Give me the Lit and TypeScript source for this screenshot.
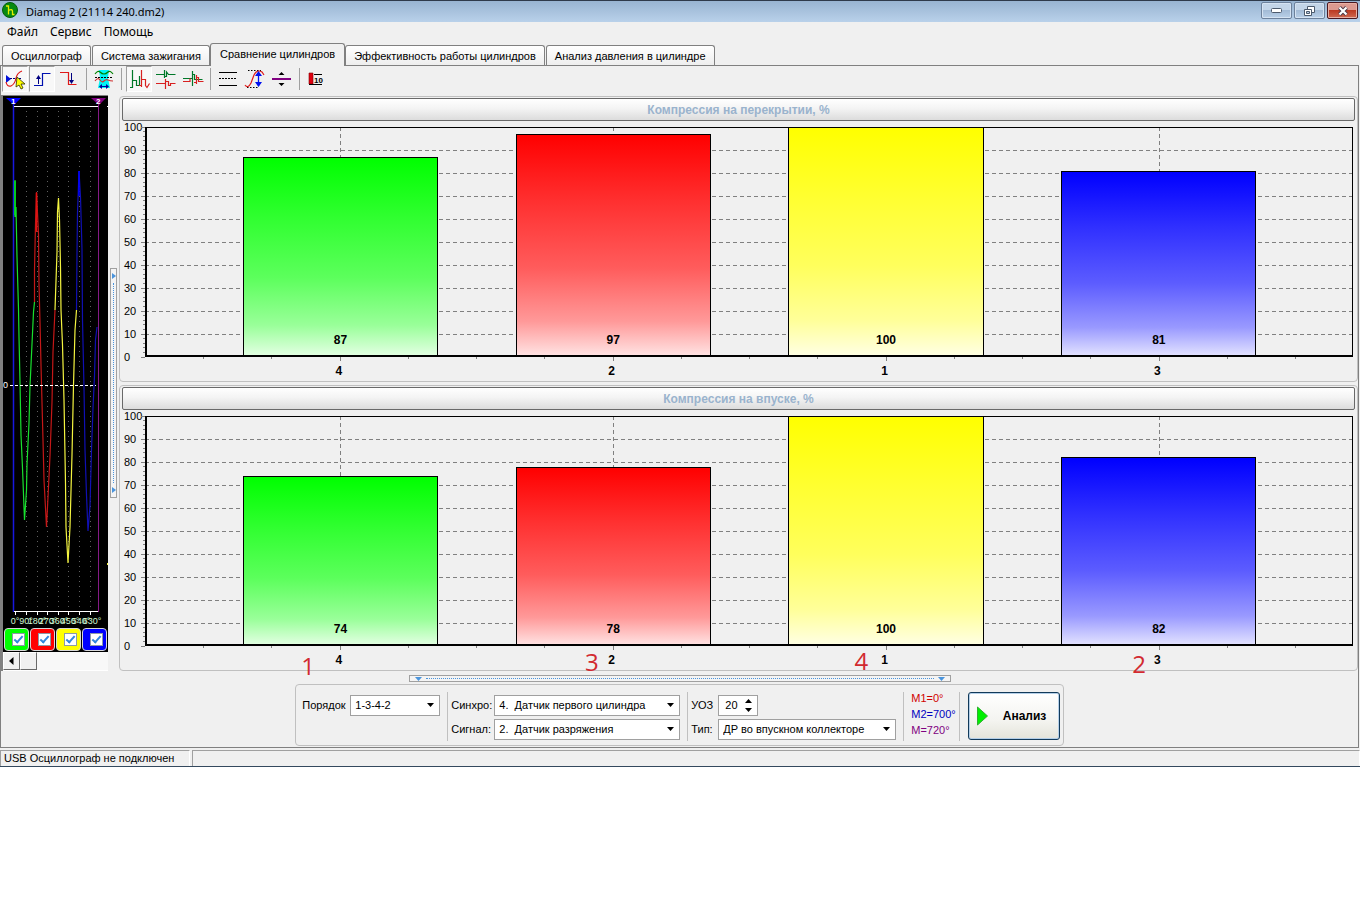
import { LitElement, html, svg, css, nothing } from "lit";
import { customElement, property, state } from "lit/decorators.js";
import { classMap } from "lit/directives/class-map.js";
import { styleMap } from "lit/directives/style-map.js";

interface Bar {
  cylinder: string;
  value: number;
  tone: string;
  note?: string;
  noteAt?: number;
  noteTop?: number;
}

const range = (n: number) => Array.from({ length: n }, (_, i) => i);

@customElement("bar-chart")
class BarChart extends LitElement {
  @property() heading = "";
  @property({ attribute: false }) bars: Bar[] = [];

  static styles = css`
    :host { display: block; border: 1px solid #c0c0c0; border-radius: 4px; padding: 1px 2px 0; font: 11px/14px "Liberation Sans", Arial, sans-serif; color: #000; }
    .head { margin: 0; height: 23px; box-sizing: border-box; border: 1px solid #696969; border-radius: 2px; background: linear-gradient(#fff, #f4f4f4 45%, #dcdcdc); text-align: center; font: bold 12px/22px "Liberation Sans", Arial, sans-serif; color: #9ab3cd; }
    .body { display: grid; grid-template-columns: 23px minmax(0, 1fr); padding: 6px 2px 0 0; }
    .scale { display: flex; flex-direction: column; justify-content: space-between; margin: -7px 0; padding-left: 2px; grid-row: 1; }
    .plot { display: grid; height: 230px; }
    .plot > * { grid-area: 1 / 1; min-width: 0; }
    .lines { width: 100%; height: 100%; overflow: visible; shape-rendering: crispEdges; }
    .bars, .names { display: flex; justify-content: space-between; }
    .bars { align-items: flex-end; padding: 0 8% 0 8.1%; }
    .bar { width: 19.25%; box-sizing: border-box; border: 1px solid #000; border-bottom: 0; display: flex; align-items: flex-end; justify-content: center; font: bold 12px/14px "Liberation Sans", Arial, sans-serif; padding-bottom: 10px; }
    .green { background: linear-gradient(#00ff00, #30ff30 30%, #5cff5c 60%, #99ff99 84%, #e6ffe6); }
    .red { background: linear-gradient(#ff0000, #ff3030 30%, #ff5c5c 60%, #ff9999 84%, #ffe6e6); }
    .yellow { background: linear-gradient(#ffff00, #ffff30 30%, #ffff5c 60%, #ffff99 84%, #ffffe6); }
    .blue { background: linear-gradient(#0000ff, #3030ff 30%, #5c5cff 60%, #9999ff 84%, #e6e6ff); }
    .frame { border: solid #000; border-width: 1px 1px 2px 2px; }
    .foot { position: relative; grid-column: 2; height: 24px; }
    .names { font: bold 12px/14px "Liberation Sans", Arial, sans-serif; padding: 7px 8.1% 0 7.95%; }
    .names span { width: 19.3%; text-align: center; }
    .note { position: absolute; font: 24px/24px "Open Sans", sans-serif; color: #d22a30; transform: translateX(-50%); }
  `;

  render() {
    return html`
      <h2 class="head">${this.heading}</h2>
      <div class="body">
        <div class="scale">${range(11).map((i) => html`<span>${100 - i * 10}</span>`)}</div>
        <div class="plot">
          <svg class="lines" aria-hidden="true">
            ${range(9).map((i) => svg`<line x1="0" x2="100%" y1="${(i + 1) * 10}%" y2="${(i + 1) * 10}%" stroke="#808080" stroke-dasharray="4 3"/>`)}
            ${range(11).map((i) => svg`<line x1="-4" x2="0" y1="${i * 10}%" y2="${i * 10}%" stroke="#808080"/>`)}
            ${range(51).map((i) => svg`<line x1="-2" x2="0" y1="${i * 2}%" y2="${i * 2}%" stroke="#808080"/>`)}
            ${this.bars.map((_, i) => svg`<line x1="${16.15 + i * 22.6}%" x2="${16.15 + i * 22.6}%" y1="0" y2="100%" stroke="#808080" stroke-dasharray="4 3"/>`)}
            ${range(17).map((i) => svg`<line x1="${4.85 + i * 5.65}%" x2="${4.85 + i * 5.65}%" y1="230" y2="${i % 4 === 2 ? 234 : 232}" stroke="#808080"/>`)}
          </svg>
          <div class="bars">
            ${this.bars.map((b) => html`<div class="bar ${b.tone}" style=${styleMap({ height: `${b.value}%` })}>${b.value}</div>`)}
          </div>
          <div class="frame"></div>
        </div>
        <div class="foot">
          <div class="names">${this.bars.map((b) => html`<span>${b.cylinder}</span>`)}</div>
          ${this.bars.map((b) => b.note ? html`<span class="note" style=${styleMap({ left: `${b.noteAt}%`, top: `${b.noteTop}px` })}>${b.note}</span>` : nothing)}
        </div>
      </div>`;
  }
}

@customElement("signal-scope")
class SignalScope extends LitElement {
  static styles = css`
    :host { display: block; width: 107px; box-sizing: border-box; border: solid #808080; border-width: 1px 0 0 2px; background: #f0f0f0; }
    .screen { display: block; width: 105px; height: 532px; background: #000; font: 9px/9px "Liberation Sans", Arial, sans-serif; }
    .channels { display: flex; gap: 1px; background: #000; width: 105px; height: 24px; padding: 0 1px 1px; box-sizing: border-box; }
    .channel { flex: 1; box-sizing: border-box; border: 1px solid #d8d8d8; border-radius: 4px; display: flex; align-items: center; justify-content: center; padding-left: 3px; }
    .green { background: #00ff00; } .red { background: #ff0000; } .yellow { background: #ffff00; } .blue { background: #0000ff; }
    .channel input { appearance: none; margin: 0; width: 13px; height: 13px; border: 1px solid #8c9aa8; background: #fff; display: grid; place-items: center; }
    .channel input:checked::before { content: ""; width: 3px; height: 7px; border: solid #2f86dd; border-width: 0 2px 2px 0; transform: rotate(42deg); margin-top: -3px; }
    .scroll { display: flex; height: 18px; width: 105px; background: #f8f8f8; border-bottom: 1px solid #fff; }
    .scroll button, .thumb { width: 17px; box-sizing: border-box; padding: 0; border: 1px solid; border-color: #fff #696969 #696969 #fff; background: #f0f0f0; display: grid; place-items: center; }
  `;

  // The screen is drawn in window coordinates; the view box starts at its corner.
  render() {
    const traces: [string, string][] = [
      ["#19e02f", "15,180 15,217 16,207 17,257 18.5,309 19,337 20,382 21,435 22.5,468 24.5,520 26.5,490 27,464 29,423 30,386 32,344 33.5,312 34.5,302"],
      ["#c41818", "34.5,302 34.5,270 35.5,224 36.5,192 38.5,234 39,284 40,322 41,365 43,440 44,480 46.5,527 48,497 50,456 52,402 53,352 55,310"],
      ["#f4f440", "55,310 57,252 57.5,212 58.5,198 59.5,220 60.5,267 61,310 62.5,345 64,400 65.5,483 66,527 68,563 70,527 72,455 73.5,385 75,330 76.5,310"],
      ["#1010b4", "76.5,310 77,252 77.5,212 79,171 80.5,197 82,250 82.5,320 84,388 85,450 86.5,495 88,531 90,506 91.5,450 93,408 94.5,376 95.5,340 97,327"],
    ];
    const degrees = ["0°", "90°", "180°", "270°", "360°", "450°", "540°", "630°"];
    return html`
      <svg class="screen" viewBox="3 96 105 532" aria-label="Осциллограмма">
        <g stroke="#606060" stroke-dasharray="1 4">
          ${[26.5, 37.5, 47.5, 58.5, 68.5, 79.5, 90.5].map((x) => svg`<line x1="${x}" x2="${x}" y1="111" y2="610"/>`)}
        </g>
        <path d="M13.500 98V612" stroke="#1818e0" stroke-width="1.500"/>
        <path d="M98.500 98V612" stroke="#861a86"/>
        <path d="M14 106.500H98M107 106.500h1M14 611.500H98M15.500 612v3M26.500 612v3M37.500 612v3M47.500 612v3M58.500 612v3M68.500 612v3M79.500 612v3M90.500 612v3" stroke="#fff"/>
        ${traces.map(([c, p]) => svg`<polyline points="${p}" fill="none" stroke="${c}" stroke-width="1.200"/>`)}
        <path d="M79 171V196" stroke="#0000ff" stroke-width="1.500"/>
        <path d="M15 181V215" stroke="#00e020" stroke-width="1.500"/>
        <path d="M36.500 193V232" stroke="#e01010" stroke-width="1.500"/>
        <path d="M10 385.500H96" stroke="#fff" stroke-dasharray="3 2"/>
        <text x="3" y="388" fill="#fff">0</text>
        <path d="M6 98h15l-7 7z" fill="#0000ff"/>
        <path d="M91 98h15l-7 7z" fill="#800080"/>
        <text x="11" y="104" fill="#fff" font-size="8" font-weight="bold">1</text>
        <text x="96" y="104" fill="#fff" font-size="8" font-weight="bold">2</text>
        <path d="M107 564h1" stroke="#f4f440" stroke-width="2"/>
        ${degrees.map((d, i) => svg`<text x="${15 + i * 11}" y="624" text-anchor="middle" fill="#d4f8d4">${d}</text>`)}
      </svg>
      <div class="channels">
        ${["green", "red", "yellow", "blue"].map((c, i) => html`<label class="channel ${c}"><input type="checkbox" checked aria-label="Канал ${i + 1}" /></label>`)}
      </div>
      <div class="scroll">
        <button aria-label="Влево"><svg width="5" height="8"><path d="M4.500 0v8L0 4z" /></svg></button>
        <div class="thumb"></div>
      </div>`;
  }
}

@customElement("app-root")
class AppRoot extends LitElement {
  @state() private tab = 2;
  @state() private pressed = new Set([0, 1, 4]);

  private tabs = ["Осциллограф", "Система зажигания", "Сравнение цилиндров", "Эффективность работы цилиндров", "Анализ давления в цилиндре"];

  private overlap: Bar[] = [
    { cylinder: "4", value: 87, tone: "green" },
    { cylinder: "2", value: 97, tone: "red" },
    { cylinder: "1", value: 100, tone: "yellow" },
    { cylinder: "3", value: 81, tone: "blue" },
  ];

  private intake: Bar[] = [
    { cylinder: "4", value: 74, tone: "green", note: "1", noteAt: 13.5, noteTop: 8 },
    { cylinder: "2", value: 78, tone: "red", note: "3", noteAt: 37, noteTop: 4 },
    { cylinder: "1", value: 100, tone: "yellow", note: "4", noteAt: 59.3, noteTop: 3 },
    { cylinder: "3", value: 82, tone: "blue", note: "2", noteAt: 82.3, noteTop: 6 },
  ];

  static styles = css`
    :host { display: block; font: 11px/14px "Liberation Sans", Arial, sans-serif; color: #000; background: #fff; min-height: 100vh; }
    button { font: inherit; color: inherit; }
    .window { background: #f0f0f0; border-bottom: 1px solid #34495e; }
    .title { display: flex; align-items: center; height: 22px; box-sizing: border-box; border-top: 1px solid #2e3a4a; background: linear-gradient(#98b4d1, #b9d1ea); padding: 0 2px; font: 11px/18px "Noto Sans", sans-serif; }
    .title h1 { font: inherit; margin: 0 auto 0 8px; }
    .title > svg { align-self: flex-start; margin-top: 1px; }
    .sys { display: flex; gap: 2px; align-self: flex-start; margin-top: 1px; }
    .sys button { width: 31px; height: 17px; padding: 0; border: 1px solid #6d819b; border-radius: 2px; background: linear-gradient(#c3d5e8 45%, #a3bbd6 50%, #b9d0e8); box-shadow: inset 0 0 0 1px #d5e3f2; display: grid; place-items: center; }
    .sys .close { border-color: #4b1820; background: linear-gradient(#dc9a90 45%, #bc3a22 50%, #cf6a52); box-shadow: inset 0 0 0 1px #e8b0a4; }
    .menu { display: flex; gap: 12px; height: 21px; padding: 0 7px; font: 12px/19px "Noto Sans", sans-serif; }
    .menu button { border: 0; background: none; padding: 0; align-self: flex-start; }
    .tabs { display: flex; align-items: flex-end; height: 22px; padding-left: 2px; gap: 1px; }
    .tab { height: 20px; padding: 0 8px; border: 1px solid #808080; border-bottom: 0; border-radius: 3px 3px 0 0; background: linear-gradient(#fff, #eee); white-space: nowrap; }
    .tab.on { height: 23px; margin: 0 -1px -1px; padding: 0 9px 3px; background: #f0f0f0; z-index: 1; }
    .panel { border: 1px solid #808080; margin-right: 1px; }
    .tools { display: flex; align-items: flex-start; height: 29px; gap: 1px; padding-left: 1px; }
    .tool { width: 26px; height: 26px; padding: 0; border: 1px solid transparent; background: none; display: grid; place-items: center; }
    .tool.down { border-color: #a0a0a0 #fff #fff #a0a0a0; background: #f8f8f8; }
    .rule { width: 1px; height: 22px; background: #a0a0a0; margin: 2px 3px 0; }
    .work { display: flex; align-items: flex-start; }
    .grip { align-self: center; margin: 0 2px; width: 7px; height: 230px; border: 1px solid #a0a0a0; background: #f4f4f4; display: flex; flex-direction: column; align-items: center; padding: 4px 0; box-sizing: border-box; }
    .grip i { flex: 1; margin: 4px 0; border-left: 1px dotted #4a94dc; }
    .charts { flex: 1; min-width: 0; display: flex; flex-direction: column; gap: 3px; padding-top: 1px; }
    .hgrip { margin: 4px auto 2px; width: 542px; height: 7px; border: 1px solid #a0a0a0; background: #f4f4f4; display: flex; align-items: center; padding: 0 5px; box-sizing: border-box; }
    .hgrip i { flex: 1; margin: 0 4px; border-top: 1px dotted #4a94dc; }
    .form { width: max-content; margin: 0 auto 1px; box-sizing: border-box; border: 1px solid #c0c0c0; border-radius: 4px; display: flex; align-items: flex-start; height: 62px; padding: 7px 3px 0 6px; }
    .group { display: grid; align-items: center; gap: 4px; grid-auto-rows: 20px; margin-top: 3px; }
    .divider { width: 1px; height: 49px; background: #c0c0c0; margin: 0 3px 0 7px; }
    .order { grid-template-columns: 44px 90px; }
    .source { grid-template-columns: 39px 186px; }
    .kind { grid-template-columns: 23px 178px; }
    .pick { display: grid; height: 21px; }
    .pick > * { grid-area: 1 / 1; }
    .pick svg { justify-self: end; align-self: center; margin-right: 6px; pointer-events: none; }
    select, input[type="number"] { appearance: none; font: inherit; color: inherit; box-sizing: border-box; width: 100%; height: 21px; border: 1px solid #a0a0a0; border-radius: 0; background: #fff; padding: 0 4px; margin: 0; white-space: pre; }
    input[type="number"]::-webkit-inner-spin-button { display: none; }
    .spin { width: 40px; }
    .spin input { padding-left: 6px; }
    .marks { display: flex; flex-direction: column; line-height: 16px; margin: -2px -4px 0 4px; }
    .m1 { color: #d00000; } .m2 { color: #0000c0; } .m { color: #800080; }
    .go { width: 92px; height: 48px; margin-left: 5px; border: 1px solid #123a5a; border-radius: 3px; box-shadow: inset 0 0 0 1px #b4cfe8; background: linear-gradient(#fff, #f4f4f0 60%, #e4e4da); display: flex; align-items: center; gap: 15px; padding: 0 8px; font: bold 12px/14px "Liberation Sans", Arial, sans-serif; }
    .status { display: flex; gap: 2px; padding-top: 2px; height: 16px; }
    .status span { border: 1px solid #a0a0a0; border-color: #a0a0a0 #fff #fff #a0a0a0; border-bottom: 0; padding-left: 3px; line-height: 15px; }
    .status .msg { width: 185px; }
    .status .rest { flex: 1; }
  `;

  private icons = [
    svg`<path d="M3 8v8l5-4z" fill="#0010d8"/><path d="M7 11.500h12" stroke="#000080" stroke-dasharray="2 1"/><path d="M3 15q1 5 5 4q4-2 5-8q1-5 6-7" fill="none" stroke="#e01818" stroke-width="1.200"/><path d="M14 10l8 7h-4l2 4-2 1-2-4-3 2z" fill="#ffff00" stroke="#303000" stroke-width=".8"/>`,
    svg`<path d="M4 18.500h8.500v-12h8" fill="none" stroke="#0010b0" stroke-width="1.200"/><path d="M8.500 9v8" stroke="#000080"/><path d="M6 12l2.500-4 2.500 4z" fill="#000080"/>`,
    svg`<path d="M3 5.500h8.500v12h8" fill="none" stroke="#e01818" stroke-width="1.200"/><path d="M14.500 6v8" stroke="#000080"/><path d="M12 13l2.500 4 2.500-4z" fill="#000080"/>`,
    svg`<path d="M7 3h10l-1 8 2 10H6l2-10z" fill="#00f4f4"/><path d="M3 7q3-4 5-2t4 2 4-2 5 2" fill="none" stroke="#008000" stroke-width="1.200"/><path d="M3 10.500h18" stroke="#000" stroke-dasharray="2 1"/><path d="M3 14q3-4 5-1t4 1 4-1 5 1" fill="none" stroke="#d03030" stroke-width="1.200"/><path d="M8 19.500h8" stroke="#0000a0"/><path d="M7 19.500l3-2.500v5zM17 19.500l-3-2.500v5z" fill="#0000a0"/>`,
    svg`<path d="M5.500 3v18M3 20.500h2.500M5.500 13.500h4v5h3V9" fill="none" stroke="#007828" stroke-width="1.200"/><path d="M14.500 3v17M12 18.500h2.500M14.500 12.500h4v6l1.500 2 2.500-4" fill="none" stroke="#d82020" stroke-width="1.200"/>`,
    svg`<path d="M2 7.500h8M10.500 3v8M10.500 9.500h2V5l2 2.500h7" fill="none" stroke="#007828" stroke-width="1.200"/><path d="M2 16.500h9M11.500 12v10M11.500 14.500h3v4h2v-2h5" fill="none" stroke="#d82020" stroke-width="1.200"/>`,
    svg`<path d="M2 11.500h9M11.500 4v15M11.500 7.500h2v5h8" fill="none" stroke="#007828" stroke-width="1.200"/><path d="M2 14.500h7v-3M15.500 8v9M13 15.500h2.500M15.500 10.500h2v4h5" fill="none" stroke="#d82020" stroke-width="1.200"/>`,
    svg`<path d="M3 5.500h18M3 18.500h18" stroke="#000"/><path d="M3 11.500h18" stroke="#000" stroke-dasharray="2 1"/>`,
    svg`<path d="M5 3.500h13M4 20.500h12" stroke="#000" stroke-dasharray="1.500 1.500"/><path d="M2 18q3 4 6-2l3-8q3-6 8-3l2 3" fill="none" stroke="#e01818" stroke-width="1.200"/><path d="M15.500 7v12" stroke="#0010f0" stroke-width="1.300"/><path d="M12 9l3.500-5L19 9zM12 15l3.500 5 3.500-5z" fill="#0010f0"/>`,
    svg`<path d="M2 12h19" stroke="#800080" stroke-width="2"/><path d="M8.500 8l3-3 3 3zM8.500 16l3 3 3-3z"/>`,
    svg`<path d="M4 6h4v11H4z" fill="#e00010" stroke="#800000" stroke-width=".6"/><path d="M4 17.500h13M9 7.500h8" stroke="#000"/><text x="9" y="16" font-size="8" font-weight="bold" font-family="Liberation Sans">10</text>`,
  ];

  private arrow(dir: "down" | "right" = "down", fill = "#000") {
    return dir === "down"
      ? html`<svg width="7" height="4"><path d="M0 0h7L3.500 4z" fill=${fill} /></svg>`
      : html`<svg width="4" height="6"><path d="M0 0v6l4-3z" fill=${fill} /></svg>`;
  }

  private pick(id: string, text: string) {
    return html`<span class="pick"><select id=${id}><option>${text}</option></select>${this.arrow()}</span>`;
  }

  private toggle(i: number) {
    const next = new Set(this.pressed);
    next.has(i) ? next.delete(i) : next.add(i);
    this.pressed = next;
  }

  render() {
    return html`
      <div class="window">
        <header class="title">
          <svg width="16" height="16"><circle cx="8" cy="8" r="7.500" fill="#078a12" stroke="#045c0c" /><path d="M4 4h2.500v8.500M6.500 8.500q4-2 4 1v3h2" fill="none" stroke="#e8f000" stroke-width="1.300" /></svg>
          <h1>Diamag 2 (21114 240.dm2)</h1>
          <div class="sys">
            <button aria-label="Свернуть"><svg width="11" height="5"><rect x=".5" y=".5" width="10" height="4" rx="1" fill="#fff" stroke="#4c5a6c" /></svg></button>
            <button aria-label="Восстановить"><svg width="13" height="12"><path d="M4.500 1.500h7v6h-7z" fill="#fff" stroke="#4c5a6c" /><path d="M1.500 4.500h7v6h-7z" fill="#fff" stroke="#4c5a6c" /><path d="M3.500 6.500h3v2h-3z" fill="#b6cce4" stroke="#4c5a6c" /></svg></button>
            <button class="close" aria-label="Закрыть"><svg width="12" height="10"><path d="M2.500 1.500l7 7M9.500 1.500l-7 7" stroke="#4a3a48" stroke-width="4" /><path d="M2.500 1.500l7 7M9.500 1.500l-7 7" stroke="#fff" stroke-width="2.200" /></svg></button>
          </div>
        </header>
        <nav class="menu">${["Файл", "Сервис", "Помощь"].map((m) => html`<button>${m}</button>`)}</nav>
        <div class="tabs" role="tablist">
          ${this.tabs.map((t, i) => html`<button role="tab" class=${classMap({ tab: true, on: i === this.tab })} @click=${() => (this.tab = i)}>${t}</button>`)}
        </div>
        <main class="panel">
          <div class="tools">
            ${this.icons.map((icon, i) => html`
              ${[3, 4, 7, 10].includes(i) ? html`<span class="rule"></span>` : nothing}
              <button class=${classMap({ tool: true, down: this.pressed.has(i) })} aria-label="Инструмент ${i + 1}" @click=${() => this.toggle(i)}><svg width="24" height="24">${icon}</svg></button>`)}
          </div>
          <div class="work">
            <signal-scope></signal-scope>
            <div class="grip">${this.arrow("right", "#4a94dc")}<i></i>${this.arrow("right", "#4a94dc")}</div>
            <div class="charts">
              <bar-chart heading="Компрессия на перекрытии, %" .bars=${this.overlap}></bar-chart>
              <bar-chart heading="Компрессия на впуске, %" .bars=${this.intake}></bar-chart>
            </div>
          </div>
          <div class="hgrip">${this.arrow("down", "#4a94dc")}<i></i>${this.arrow("down", "#4a94dc")}</div>
          <form class="form" @submit=${(e: Event) => e.preventDefault()}>
            <div class="group order"><label for="order">Порядок</label>${this.pick("order", "1-3-4-2")}</div>
            <span class="divider"></span>
            <div class="group source">
              <label for="sync">Синхро:</label>${this.pick("sync", "4.\u00a0 Датчик первого цилиндра")}
              <label for="signal">Сигнал:</label>${this.pick("signal", "2.\u00a0 Датчик разряжения")}
            </div>
            <span class="divider"></span>
            <div class="group kind">
              <label for="angle">УОЗ</label>
              <span class="pick spin"><input id="angle" type="number" value="20" /><svg width="7" height="13"><path d="M0 4h7L3.500 0zM0 9h7L3.500 13z" /></svg></span>
              <label for="kind">Тип:</label>${this.pick("kind", "ДР во впускном коллекторе")}
            </div>
            <span class="divider"></span>
            <div class="marks"><span class="m1">M1=0°</span><span class="m2">M2=700°</span><span class="m">M=720°</span></div>
            <span class="divider"></span>
            <button class="go"><svg width="11" height="20"><path d="M.5 1v18L10.500 10z" fill="#00f000" stroke="#30b030" /></svg>Анализ</button>
          </form>
        </main>
        <footer class="status"><span class="msg">USB Осциллограф не подключен</span><span class="rest"></span></footer>
      </div>`;
  }
}
